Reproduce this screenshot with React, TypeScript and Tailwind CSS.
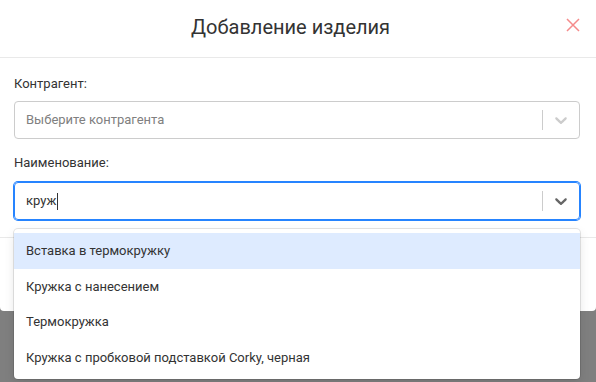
import React from "react";

function Chevron({ color }: { color: string }) {
  return (
    <svg width="20" height="20" viewBox="0 0 20 20" fill={color}>
      <path d="M4.516 7.548c0.436-0.446 1.043-0.481 1.576 0l3.908 3.747 3.908-3.747c0.533-0.481 1.141-0.446 1.574 0 0.436 0.445 0.408 1.197 0 1.615-0.406 0.418-4.695 4.502-4.695 4.502-0.217 0.223-0.502 0.335-0.787 0.335s-0.57-0.112-0.789-0.335c0 0-4.287-4.084-4.695-4.502s-0.436-1.170 0-1.615z" />
    </svg>
  );
}

export default function App() {
  const options = [
    "Вставка в термокружку",
    "Кружка с нанесением",
    "Термокружка",
    "Кружка с пробковой подставкой Corky, черная",
  ];
  return (
    <div
      className="w-[596px] h-[382px] bg-[#7f7f7f] overflow-hidden text-[#333]"
      style={{ fontFamily: "Roboto, 'Noto Sans', sans-serif" }}
    >
      <div className="w-[596px] bg-white rounded-b-[4px]">
        <div className="relative h-[58px] border-b border-[#e9e9e9] flex items-center">
          <div className="pl-[191px] text-[20px] leading-[24px] text-[#333] -mt-[3px]">
            Добавление изделия
          </div>
          <svg
            className="absolute left-[566px] top-[18px]"
            width="14"
            height="14"
            viewBox="0 0 14 14"
            stroke="#f58b8b"
            strokeWidth="1.5"
          >
            <path d="M1 1 L13 13 M13 1 L1 13" />
          </svg>
        </div>
        <div className="pl-[14px] pr-[16px] pt-[17px] pb-[17px] border-b border-[#e9e9e9]">
          <div className="text-[13px] leading-[18px] mb-[8px]">Контрагент:</div>
          <div className="h-[38px] border border-[#cccccc] rounded-[4px] flex items-center">
            <div className="flex-1 pl-[11px] text-[13px] text-[#808080]">
              Выберите контрагента
            </div>
            <div className="w-px h-[20px] bg-[#cccccc]" />
            <div className="w-[36px] flex justify-center">
              <Chevron color="#cccccc" />
            </div>
          </div>
          <div className="text-[13px] leading-[18px] mt-[15px] mb-[10px]">Наименование:</div>
          <div className="relative">
            <div className="h-[38px] border border-[#2684ff] shadow-[0_0_0_1px_#2684ff] rounded-[4px] flex items-center">
              <div className="flex-1 pl-[11px] text-[13px] text-[#333] flex items-center">
                <span>круж</span>
                <span className="w-px h-[17px] bg-[#333] ml-[1px]" />
              </div>
              <div className="w-px h-[20px] bg-[#cccccc]" />
              <div className="w-[36px] flex justify-center">
                <Chevron color="#666666" />
              </div>
            </div>
            <div className="absolute left-0 right-0 top-[47px] z-10 bg-white rounded-[4px] shadow-[0_0_0_1px_rgba(0,0,0,0.1),0_4px_11px_rgba(0,0,0,0.1)] py-[4px]">
              {options.map((o, i) => (
                <div
                  key={o}
                  className={
                    "h-[35.5px] px-[12px] flex items-center text-[13px] text-[#333] " +
                    (i === 0 ? "bg-[#deebff]" : "")
                  }
                >
                  {o}
                </div>
              ))}
            </div>
          </div>
        </div>
        <div className="h-[73px]" />
      </div>
    </div>
  );
}
